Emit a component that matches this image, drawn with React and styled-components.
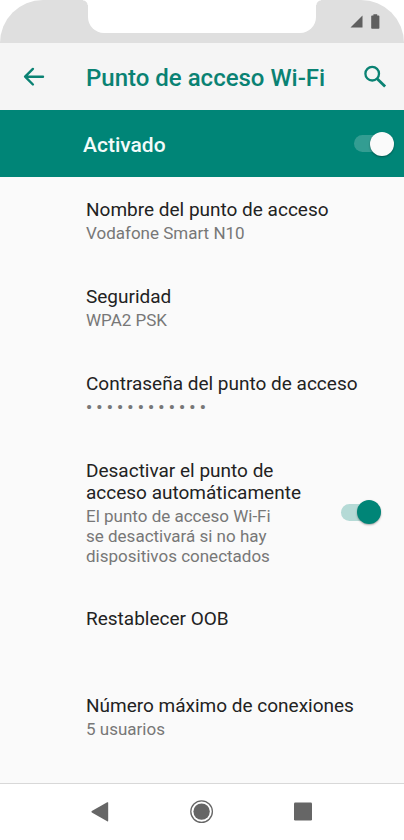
import React, { useState } from 'react';
import styled, { createGlobalStyle } from 'styled-components';

const settings = [
    { id: 'name', title: 'Nombre del punto de acceso', summary: 'Vodafone Smart N10' },
    { id: 'security', title: 'Seguridad', summary: 'WPA2 PSK' },
    { id: 'password', title: 'Contraseña del punto de acceso', summary: '• • • • • • • • • • • •', secret: true },
    {
        id: 'auto-off',
        title: 'Desactivar el punto de acceso automáticamente',
        summary: 'El punto de acceso Wi-Fi se desactivará si no hay dispositivos conectados',
        toggle: true,
    },
    { id: 'oob', title: 'Restablecer OOB' },
    { id: 'max', title: 'Número máximo de conexiones', summary: '5 usuarios' },
];

function App() {

    const [enabled, setEnabled] = useState(true);
    const [autoOff, setAutoOff] = useState(true);

    return (
        <Phone>
            <GlobalStyle />
            <StatusBar>
                <Notch />
                <StatusIcons>
                    <svg width="13" height="13" viewBox="0 0 13 13" aria-hidden="true">
                        <path d="M12.5 0.5V12.5H0.5Z" fill="#5f5f5f" />
                    </svg>
                    <svg width="9" height="15" viewBox="0 0 9 15" aria-hidden="true">
                        <path d="M2.4 0.3H6.2V1.5H7.6Q8.4 1.5 8.4 2.3V14Q8.4 14.8 7.6 14.8H1Q0.2 14.8 0.2 14V2.3Q0.2 1.5 1 1.5H2.4Z" fill="#5f5f5f" />
                    </svg>
                </StatusIcons>
            </StatusBar>
            <Header>
                <IconButton aria-label="Atrás">
                    <svg width="22" height="20" viewBox="0 0 22 20" fill="none" stroke="#0a8273" strokeWidth="2.4" strokeLinecap="round" strokeLinejoin="round">
                        <path d="M20 9.7H2.2M9.9 1.9L2.1 9.7L9.9 17.5" />
                    </svg>
                </IconButton>
                <PageTitle>Punto de acceso Wi-Fi</PageTitle>
                <IconButton aria-label="Buscar">
                    <svg width="24" height="24" viewBox="0 0 24 24" fill="none" stroke="#0a8273">
                        <circle cx="9.2" cy="8.7" r="6.8" strokeWidth="2.3" />
                        <path d="M13.9 13.4L22.1 21.6" strokeWidth="2.8" />
                    </svg>
                </IconButton>
            </Header>
            <Banner>
                <BannerLabel htmlFor="hotspot">Activado</BannerLabel>
                <Switch id="hotspot" type="checkbox" $light checked={enabled} onChange={(e) => setEnabled(e.target.checked)} />
            </Banner>
            <List>
                {settings.map(({ id, title, summary, toggle, secret }) => (
                    <Row key={id}>
                        <RowText $narrow={toggle}>
                            <RowTitle as={toggle ? 'label' : undefined} htmlFor={toggle ? id : undefined}>{title}</RowTitle>
                            {summary && <Summary $secret={secret}>{summary}</Summary>}
                        </RowText>
                        {toggle && <Switch id={id} type="checkbox" checked={autoOff} onChange={(e) => setAutoOff(e.target.checked)} />}
                    </Row>
                ))}
            </List>
            <NavBar>
                <IconButton aria-label="Volver">
                    <svg width="24" height="24" viewBox="0 0 24 24">
                        <path d="M19.2 2.8V20.8Q19.2 21.8 18.2 21.3L2.8 12.5Q2 11.8 2.8 11.1L18.2 2.3Q19.2 1.8 19.2 2.8Z" fill="#666" />
                    </svg>
                </IconButton>
                <IconButton aria-label="Inicio">
                    <svg width="24" height="24" viewBox="0 0 24 24">
                        <circle cx="11.6" cy="11.6" r="10.8" fill="none" stroke="#666" strokeWidth="1.3" />
                        <circle cx="11.6" cy="11.6" r="8.2" fill="#666" />
                    </svg>
                </IconButton>
                <IconButton aria-label="Recientes">
                    <svg width="24" height="24" viewBox="0 0 24 24">
                        <rect x="3" y="2.5" width="18" height="18" rx="1.2" fill="#666" />
                    </svg>
                </IconButton>
            </NavBar>
        </Phone>
    )
}

const GlobalStyle = createGlobalStyle`
    * {
        box-sizing: border-box;
    }
    body {
        margin: 0;
        background: #fff;
        font-family: Roboto, sans-serif;
    }
`;
const Phone = styled.div`
    display: flex;
    flex-direction: column;
    min-height: 100vh;
`;
const StatusBar = styled.div`
    display: grid;
    grid-template-columns: 88px 1fr 88px;
    height: 43px;
    background: #dfdfdf;
    border-radius: 43px 43px 0 0;
`;
const Notch = styled.div`
    position: relative;
    grid-column: 2;
    height: 33px;
    background: #fff;
    border-radius: 0 0 16px 16px;

    &::before,
    &::after {
        content: '';
        position: absolute;
        top: 0;
        width: 5px;
        height: 5px;
    }
    &::before {
        right: 100%;
        background: radial-gradient(circle at 0 100%, #dfdfdf 4px, #fff 5px);
    }
    &::after {
        left: 100%;
        background: radial-gradient(circle at 100% 100%, #dfdfdf 4px, #fff 5px);
    }
`;
const StatusIcons = styled.div`
    display: flex;
    justify-content: flex-end;
    align-items: center;
    gap: 8px;
    padding-right: 24px;
`;
const Header = styled.header`
    display: flex;
    align-items: center;
    height: 67px;
    padding: 0 17px 0 23px;
    background: #f5f5f5;
`;
const IconButton = styled.button`
    display: flex;
    padding: 0;
    border: none;
    background: none;
    cursor: pointer;
`;
const PageTitle = styled.h1`
    flex: 1;
    margin: 0 0 0 41px;
    padding-top: 2px;
    font-size: 24px;
    line-height: 28px;
    font-weight: 500;
    color: #0a8273;
`;
const Banner = styled.div`
    display: flex;
    align-items: center;
    justify-content: space-between;
    height: 67px;
    padding: 0 10px 0 83px;
    background: #008577;
`;
const BannerLabel = styled.label`
    padding-top: 2px;
    font-size: 21px;
    line-height: 28px;
    font-weight: 500;
    color: #f3fbfa;
`;
const Switch = styled.input`
    appearance: none;
    display: flex;
    align-items: center;
    flex: none;
    width: 40px;
    height: 17px;
    margin: 0;
    border-radius: 9px;
    background: ${({ $light }) => ($light ? '#339d92' : '#b5dad6')};
    cursor: pointer;

    &::before {
        content: '';
        flex: none;
        width: 24px;
        height: 24px;
        border-radius: 50%;
        background: ${({ $light }) => ($light ? '#fafafa' : '#008577')};
        box-shadow: 0 1px 2px rgba(0, 0, 0, 0.35);
    }
    &:checked::before {
        margin-left: auto;
    }
`;
const List = styled.main`
    flex: 1;
    background: #fafafa;
`;
const Row = styled.div`
    display: flex;
    align-items: center;
    justify-content: space-between;
    min-height: 87px;
    padding: 0 23px 0 86px;
`;
const RowText = styled.div`
    display: flex;
    flex-direction: column;
    align-self: flex-start;
    gap: 2px;
    max-width: ${({ $narrow }) => ($narrow ? '220px' : 'none')};
    padding: 22px 0 20px;
`;
const RowTitle = styled.div`
    font-size: 19px;
    line-height: 22px;
    color: #222;
`;
const Summary = styled.div`
    max-width: 200px;
    font-size: 17px;
    line-height: 20px;
    font-weight: ${({ $secret }) => ($secret ? 700 : 400)};
    color: #777;
`;
const NavBar = styled.nav`
    display: flex;
    justify-content: center;
    align-items: center;
    gap: 77px;
    height: 57px;
    border-top: 1px solid #d8d8d8;
    background: #fff;
`;

export default App
